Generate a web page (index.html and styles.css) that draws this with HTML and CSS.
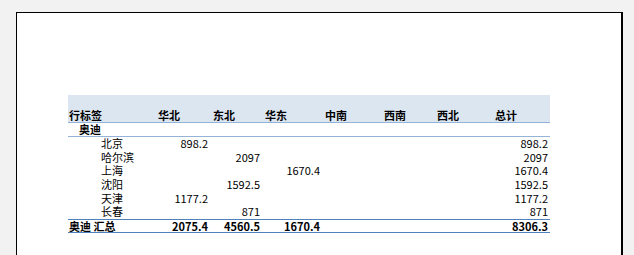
FILE: index.html
```html
<!DOCTYPE html>
<html lang="zh">
<head>
<meta charset="utf-8">
<link rel="stylesheet" href="styles.css">
</head>
<body>
<div class="sheet">
  <div class="pivot">
    <div class="row head">
      <div class="c lbl">行标签</div>
      <div class="c">华北</div>
      <div class="c">东北</div>
      <div class="c">华东</div>
      <div class="c">中南</div>
      <div class="c">西南</div>
      <div class="c">西北</div>
      <div class="c">总计</div>
    </div>
    <div class="row group">
      <div class="c lbl l1">奥迪</div>
      <div class="c"></div><div class="c"></div><div class="c"></div><div class="c"></div><div class="c"></div><div class="c"></div><div class="c"></div>
    </div>
    <div class="row data">
      <div class="c lbl l2">北京</div>
      <div class="c n">898.2</div><div class="c n"></div><div class="c n"></div><div class="c n"></div><div class="c n"></div><div class="c n"></div><div class="c n">898.2</div>
    </div>
    <div class="row data">
      <div class="c lbl l2">哈尔滨</div>
      <div class="c n"></div><div class="c n">2097</div><div class="c n"></div><div class="c n"></div><div class="c n"></div><div class="c n"></div><div class="c n">2097</div>
    </div>
    <div class="row data">
      <div class="c lbl l2">上海</div>
      <div class="c n"></div><div class="c n"></div><div class="c n">1670.4</div><div class="c n"></div><div class="c n"></div><div class="c n"></div><div class="c n">1670.4</div>
    </div>
    <div class="row data">
      <div class="c lbl l2">沈阳</div>
      <div class="c n"></div><div class="c n">1592.5</div><div class="c n"></div><div class="c n"></div><div class="c n"></div><div class="c n"></div><div class="c n">1592.5</div>
    </div>
    <div class="row data">
      <div class="c lbl l2">天津</div>
      <div class="c n">1177.2</div><div class="c n"></div><div class="c n"></div><div class="c n"></div><div class="c n"></div><div class="c n"></div><div class="c n">1177.2</div>
    </div>
    <div class="row data">
      <div class="c lbl l2">长春</div>
      <div class="c n"></div><div class="c n">871</div><div class="c n"></div><div class="c n"></div><div class="c n"></div><div class="c n"></div><div class="c n">871</div>
    </div>
    <div class="row total">
      <div class="c lbl">奥迪 汇总</div>
      <div class="c n">2075.4</div><div class="c n">4560.5</div><div class="c n">1670.4</div><div class="c n"></div><div class="c n"></div><div class="c n"></div><div class="c n">8306.3</div>
    </div>
  </div>
</div>
</body>
</html>
```
FILE: styles.css
```css
html, body {
  margin: 0;
  padding: 0;
  background: #f2f2f2;
  overflow: hidden;
  height: 255px;
}
.sheet {
  box-sizing: border-box;
  margin: 12px 0 0 16px;
  width: 607px;
  height: 243px;
  background: #ffffff;
  border-left: 1px solid #000;
  border-top: 1px solid #000;
  border-right: 2px solid #000;
  padding-top: 82px;
  padding-left: 51px;
  font-family: "Noto Sans CJK SC", "Noto Sans", sans-serif;
  font-size: 11px;
  color: #000;
}
.pivot {
  width: 482px;
}
.row {
  display: grid;
  grid-template-columns: 87px 55px 52px 60px 59px 53px 58px 58px;
}
.c {
  padding: 0 2px 0 3px;
  white-space: nowrap;
}
.lbl { padding-left: 1px; }
.n { text-align: right; padding-right: 2px; }
.head {
  background: #dce6f1;
  height: 27px;
  border-bottom: 1px solid #95b3d7;
  font-weight: bold;
  align-items: end;
  line-height: 14px;
}
.group {
  height: 13px;
  line-height: 13px;
  font-weight: bold;
  border-bottom: 1px solid #95b3d7;
}
.l1 { padding-left: 11px; }
.l2 { padding-left: 33px; }
.data {
  height: 13.7px;
  line-height: 13.7px;
}
.total {
  height: 12px;
  line-height: 12px;
  font-weight: bold;
  border-top: 1px solid #4f81bd;
  border-bottom: 1px solid #4f81bd;
}
```
